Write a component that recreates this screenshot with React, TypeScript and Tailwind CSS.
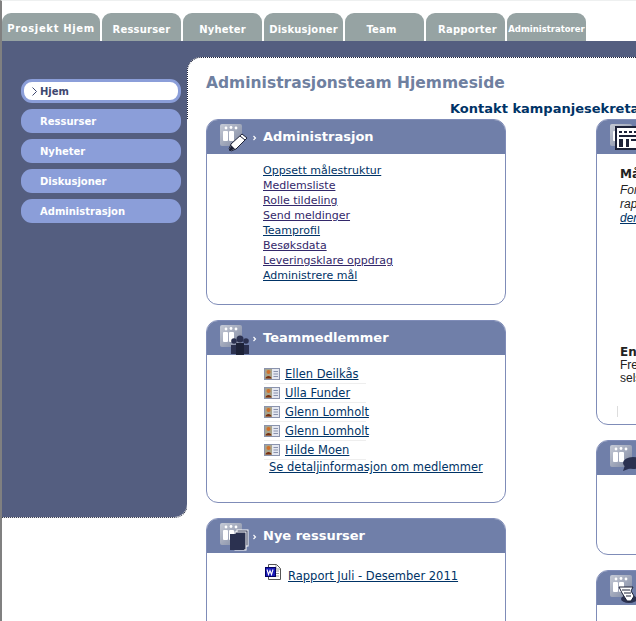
import React from "react";

const tabs = [
  { t: "Prosjekt Hjem", w: "w-[98px]", c: "text-[10px] text-[#eef1f1] pt-[2px] tracking-[0.65px]" },
  { t: "Ressurser", w: "w-[79px]", c: "text-[10px] pt-[4px] tracking-[0.2px]" },
  { t: "Nyheter", w: "w-[79px]", c: "text-[10px] pt-[4px] tracking-[0.2px]" },
  { t: "Diskusjoner", w: "w-[79px]", c: "text-[10px] pt-[4px] tracking-[0.2px]" },
  { t: "Team", w: "w-[79px]", c: "text-[10px] pt-[4px] pr-[6px] tracking-[0.2px]" },
  { t: "Rapporter", w: "w-[79px]", c: "text-[10px] pt-[4px] pl-[4px] tracking-[0.2px]" },
  { t: "Administratorer", w: "w-[79px]", c: "text-[8.5px] pt-[4px]" },
];

function BaseIcon({ children }: { children?: React.ReactNode }) {
  return (
    <svg width="36" height="30" viewBox="0 0 36 30" className="shrink-0">
      <defs>
        <linearGradient id="bi" x1="0" y1="0" x2="1" y2="1">
          <stop offset="0" stopColor="#c6cbd6" />
          <stop offset="1" stopColor="#7d86a0" />
        </linearGradient>
      </defs>
      <rect x="0" y="0" width="22" height="22" rx="2" fill="url(#bi)" />
      <circle cx="6" cy="4" r="1.4" fill="#fff" />
      <circle cx="11" cy="3.5" r="1.4" fill="#fff" />
      <circle cx="16" cy="4" r="1.4" fill="#fff" />
      <rect x="3" y="7" width="5" height="10" rx="1" fill="#fff" />
      <rect x="9" y="7" width="5" height="10" rx="1" fill="#fff" />
      {children}
    </svg>
  );
}

const pencil = (
  <g>
    <path d="M9 25 L11 20 L22 10 L27 14 L16 25 L11 27 Z" fill="#fff" stroke="#1c2036" strokeWidth="1" />
    <path d="M9 27 L11 21 L15 25 Z" fill="#1c2036" />
    <path d="M20 12 L25 16" stroke="#1c2036" />
  </g>
);
const people = (
  <g fill="#2b3150">
    <circle cx="20" cy="14" r="3.500" />
    <circle cx="14" cy="16" r="2.800" />
    <circle cx="26" cy="16" r="2.800" />
    <path d="M11 20h6v9h-6z M23 20h6v9h-6z" />
    <path d="M16 18h8v12h-8z" fill="#1d2238" />
  </g>
);
const pages = (
  <g>
    <rect x="17" y="7" width="11" height="16" fill="#2b3150" stroke="#fff" />
    <rect x="15" y="9" width="11" height="18" fill="#2b3150" stroke="#fff" />
    <rect x="10" y="11" width="14" height="16" fill="#2b3150" />
  </g>
);
const building = (
  <g>
    <rect x="6" y="3" width="22" height="22" fill="#fff" stroke="#1d2238" strokeWidth="2" />
    <path d="M9 7h3v2H9zM14 7h3v2h-3zM19 7h3v2h-3zM24 7h2v2h-2zM9 11h17v2H9zM9 15h4v8H9zM16 15h3v8h-3zM21 15h5v2h-5z" fill="#1d2238" />
  </g>
);
const bubble = (
  <g>
    <ellipse cx="23" cy="18" rx="10" ry="6" fill="#2b3150" />
    <path d="M15 20 L13 26 L21 23 Z" fill="#2b3150" />
  </g>
);
const scroll = (
  <g>
    <ellipse cx="19" cy="24" rx="8" ry="4" fill="#2b3150" />
    <path d="M9 12h14l-2 4 3 5-3 5h-4l-5-8z" fill="#fff" stroke="#1c2036" />
    <path d="M12 15h8M14 18h7M16 21h5" stroke="#1c2036" />
  </g>
);

function Box({
  title,
  icon,
  h,
  children,
}: {
  title?: string;
  icon: React.ReactNode;
  h: string;
  children?: React.ReactNode;
}) {
  return (
    <section className={`w-[300px] ${h} shrink-0 rounded-[12px] border border-[#7f8cb8] overflow-hidden bg-white`}>
      <div className="h-[35px] -mx-px -mt-px bg-[#707fa9] flex items-start pl-[14px] pt-[5px]">
        <BaseIcon>{icon}</BaseIcon>
        {title && (
          <div className="flex items-center h-[25px] -ml-[4px] pt-[1px]">
            <svg width="6" height="8" viewBox="0 0 6 8" className="mr-[5px] shrink-0 mt-[1px]">
              <path d="M1.500 2l2 2-2 2" fill="none" stroke="#fff" strokeWidth="1.200" />
            </svg>
            <span className="text-white font-bold text-[13px]">{title}</span>
          </div>
        )}
      </div>
      {children}
    </section>
  );
}

function CardIcon() {
  return (
    <svg width="16" height="12" viewBox="0 0 16 12" className="shrink-0">
      <rect x="0.500" y="0.500" width="15" height="11" fill="#e4e7f0" stroke="#8a93ad" />
      <rect x="1" y="1" width="7" height="10" fill="#a8a48c" />
      <circle cx="4.500" cy="4" r="2" fill="#d0702c" />
      <path d="M1.500 10.500c0-3.500 6-3.500 6 0z" fill="#7a2f10" />
      <path d="M9.500 3.500h4.500M9.500 6h4.500M9.500 8.500h4.500" stroke="#8a93ad" />
    </svg>
  );
}

function WordIcon() {
  return (
    <svg width="16" height="17" viewBox="0 0 16 17" className="shrink-0">
      <path d="M3.500 .5h8l4 4v11h-12z" fill="#fff" stroke="#555" />
      <path d="M11 1v4h4M11 7h3M11 9.500h3M11 12h3" stroke="#999" fill="none" />
      <rect x="0.500" y="3.500" width="10" height="9" fill="#1a1ab8" stroke="#000060" />
      <path d="M2 5.500l1.500 5 1.500-4 1.500 4 1.500-5" stroke="#fff" fill="none" strokeWidth="1.100" />
    </svg>
  );
}

const links = [
  ["Oppsett målestruktur", "text-[#003366]"],
  ["Medlemsliste", "text-[#33286a]"],
  ["Rolle tildeling", "text-[#33286a]"],
  ["Send meldinger", "text-[#33286a]"],
  ["Teamprofil", "text-[#003366]"],
  ["Besøksdata", "text-[#33286a]"],
  ["Leveringsklare oppdrag", "text-[#33286a]"],
  ["Administrere mål", "text-[#003366]"],
];

const members = ["Ellen Deilkås", "Ulla Funder", "Glenn Lomholt", "Glenn Lomholt", "Hilde Moen"];

const sideNav = ["Ressurser", "Nyheter", "Diskusjoner", "Administrasjon"];

export default function App() {
  return (
    <div
      className="w-[636px] h-[621px] overflow-hidden bg-white border-l-2 border-[#808080] border-t border-t-[#eef0f0]"
      style={{ fontFamily: '"DejaVu Sans", Verdana, sans-serif' }}
    >
      <nav className="flex gap-[2px] pt-[12px] h-[40px]">
        {tabs.map((tab) => (
          <div
            key={tab.t}
            className={`${tab.w} h-[28px] bg-[#96a3a3] rounded-t-[9px] flex items-center justify-center font-bold text-white whitespace-nowrap ${tab.c}`}
          >
            {tab.t}
          </div>
        ))}
      </nav>
      <div className="h-[16px] bg-[#545e80]" />
      <div className="flex">
        <aside className="w-[186px] h-[461px] shrink-0 bg-[#545e80] bg-clip-padding border-r border-b border-dotted border-[#1d2238] rounded-br-[14px] pl-[19px] pt-[22px] flex flex-col gap-[6px]">
          <div className="w-[160px] h-[24px] bg-white border-[3px] border-[#8b9ed9] rounded-[11px] flex items-center pl-[8px] text-[10px] font-bold text-[#3f4870]">
            <svg width="5" height="9" viewBox="0 0 5 9" className="mr-[3px] shrink-0">
              <path d="M.5.5l4 4-4 4" fill="none" stroke="#3f4870" strokeWidth="1" />
            </svg>
            Hjem
          </div>
          {sideNav.map((s) => (
            <div key={s} className="w-[160px] h-[24px] bg-[#8b9ed9] rounded-[11px] flex items-center pl-[19px] text-[10px] font-bold text-white">
              {s}
            </div>
          ))}
        </aside>
        <main className="-ml-px flex-1 min-w-0 bg-[linear-gradient(#545e80,#545e80)] bg-no-repeat bg-[length:20px_20px]">
          <div className="h-[62px] bg-white border-t border-l border-dotted border-[#1d2238] rounded-tl-[14px] pl-[18px] pt-[14px]">
            <h1 className="text-[15.500px] leading-[22px] font-bold text-[#6f80a0] whitespace-nowrap">Administrasjonsteam Hjemmeside</h1>
            <div className="mt-[6px] ml-[244px] text-[13px] leading-[18px] font-bold text-[#003366] whitespace-nowrap">Kontakt kampanjesekretariatet</div>
          </div>
          <div className="flex gap-[90px] pl-[19px] bg-white">
            <div className="flex flex-col gap-[15px]">
              <Box title="Administrasjon" icon={pencil} h="h-[186px]">
                <ul className="pl-[56px] pt-[9px] text-[11px] leading-[15px]">
                  {links.map(([l, c]) => (
                    <li key={l}>
                      <a className={`underline ${c}`}>{l}</a>
                    </li>
                  ))}
                </ul>
              </Box>
              <Box title="Teammedlemmer" icon={people} h="h-[183px]">
                <ul className="pl-[57px] pt-[10px] text-[11.500px]">
                  {members.map((m, i) => (
                    <li key={i} className="w-[102px] h-[19px] flex items-center gap-[5px] border-b border-[#eeeeee]">
                      <CardIcon />
                      <a className="underline text-[#003366] whitespace-nowrap pt-[1px]">{m}</a>
                    </li>
                  ))}
                </ul>
                <a className="block ml-[62px] text-[11.500px] leading-[15px] underline text-[#003366] whitespace-nowrap">
                  Se detaljinformasjon om medlemmer
                </a>
              </Box>
              <Box title="Nye ressurser" icon={pages} h="h-[180px]">
                <div className="flex items-start pl-[58px] pt-[11px] gap-[7px]">
                  <WordIcon />
                  <a className="mt-[5px] text-[11.500px] leading-[15px] underline text-[#003366] whitespace-nowrap">Rapport Juli - Desember 2011</a>
                </div>
              </Box>
            </div>
            <div className="flex flex-col gap-[15px] shrink-0">
              <Box icon={building} h="h-[306px]">
                <div className="pl-[23px] pt-[13px] whitespace-nowrap">
                  <div className="text-[12px] leading-[14px] font-bold text-[#222]">Måling</div>
                  <div className="font-['Liberation_Sans',sans-serif] text-[12px] leading-[14px] italic text-[#222] mt-[2px]">
                    <p>For å få</p>
                    <p>rapporter</p>
                    <a className="block underline text-[#003366]">denne</a>
                  </div>
                  <div className="mt-[120px] text-[12px] leading-[14px] font-bold text-[#222]">Enkel</div>
                  <div className="font-['Liberation_Sans',sans-serif] text-[12px] leading-[13px] text-[#222]">
                    <p>Fremdrift</p>
                    <p>selskap</p>
                  </div>
                  <div className="mt-[21px] -ml-[3px] w-px h-[11px] bg-[#dddddd]" />
                </div>
              </Box>
              <Box icon={bubble} h="h-[115px]" />
              <Box icon={scroll} h="h-[180px]" />
            </div>
          </div>
        </main>
      </div>
    </div>
  );
}
